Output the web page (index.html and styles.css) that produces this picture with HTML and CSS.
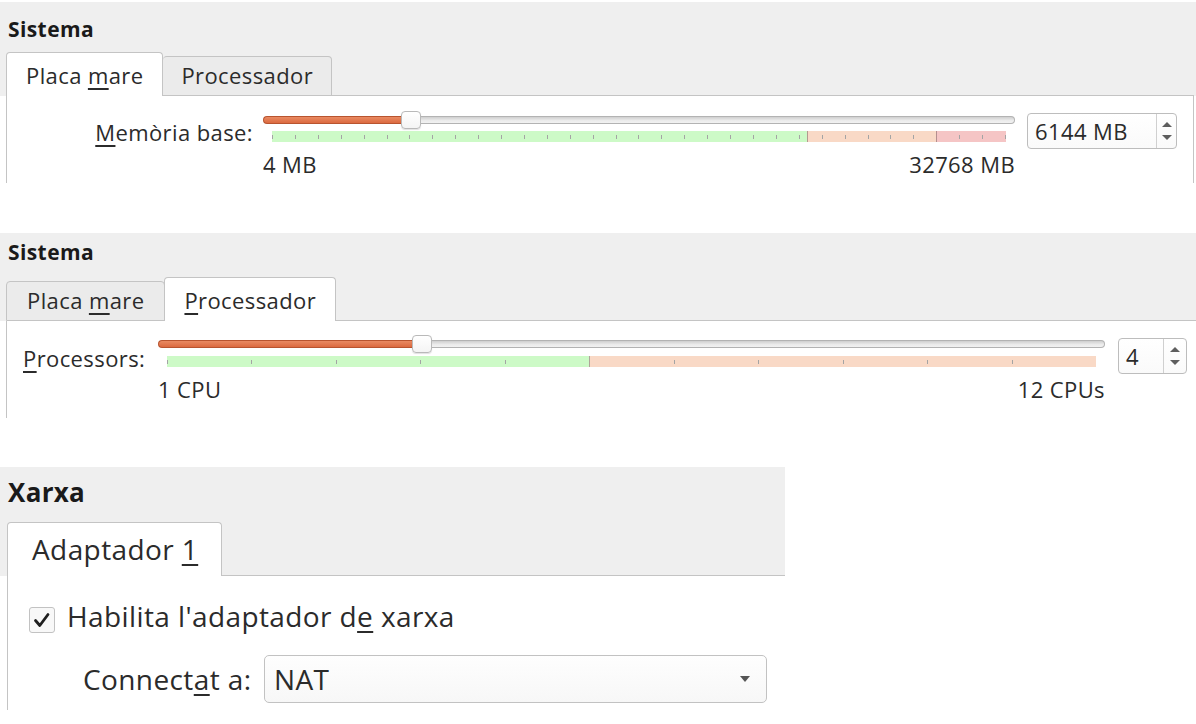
FILE: index.html
```html
<!DOCTYPE html>
<html lang="ca">
<head>
<meta charset="utf-8">
<title>Configuració</title>
<link rel="stylesheet" href="styles.css">
</head>
<body>
<main class="page">

  <section class="group group-a">
    <div class="group-head">
      <h2 class="group-title">Sistema</h2>
      <div class="tabs tabs-a">
        <div class="tab tab-active">Placa <span class="mn">m</span>are</div>
        <div class="tab">Processador</div>
        <div class="tab-fill"></div>
      </div>
    </div>
    <div class="pane pane-a">
      <div class="slider-row">
        <div class="field-label label-mem"><span class="mn">M</span>emòria base:</div>
        <div class="slider slider-mem">
          <div class="track">
            <div class="fill" style="width:138px"></div>
            <div class="knob"></div>
            <div class="rest"></div>
          </div>
          <div class="scale scale-mem"></div>
          <div class="range"><span>4 MB</span><span>32768 MB</span></div>
        </div>
        <div class="spin spin-mem">
          <span class="spin-value">6144 MB</span>
          <span class="spin-arrows"><i class="arr-up"></i><i class="arr-down"></i></span>
        </div>
      </div>
    </div>
  </section>

  <section class="group group-b">
    <div class="group-head">
      <h2 class="group-title">Sistema</h2>
      <div class="tabs">
        <div class="tab">Placa <span class="mn">m</span>are</div>
        <div class="tab tab-active"><span class="mn">P</span>rocessador</div>
        <div class="tab-fill"></div>
      </div>
    </div>
    <div class="pane pane-b">
      <div class="slider-row">
        <div class="field-label label-cpu"><span class="mn">P</span>rocessors:</div>
        <div class="slider slider-cpu">
          <div class="track">
            <div class="fill" style="width:254px"></div>
            <div class="knob"></div>
            <div class="rest"></div>
          </div>
          <div class="scale scale-cpu"></div>
          <div class="range"><span>1 CPU</span><span>12 CPUs</span></div>
        </div>
        <div class="spin spin-cpu">
          <span class="spin-value">4</span>
          <span class="spin-arrows"><i class="arr-up"></i><i class="arr-down"></i></span>
        </div>
      </div>
    </div>
  </section>

  <section class="group group-c">
    <div class="group-head">
      <h2 class="group-title">Xarxa</h2>
      <div class="tabs">
        <div class="tab tab-active">Adaptador <span class="mn">1</span></div>
        <div class="tab-fill"></div>
      </div>
    </div>
    <div class="pane pane-c">
      <div class="check-row">
        <span class="checkbox"><svg width="26" height="26" viewBox="0 0 26 26"><path d="M6.5 13.5 L10.8 18.5 L19 7.5" fill="none" stroke="#1f1f1f" stroke-width="2.8" stroke-linecap="round" stroke-linejoin="round"/></svg></span>
        <span class="check-text">Habilita l'adaptador d<span class="mn">e</span> xarxa</span>
      </div>
      <div class="form-row">
        <span class="form-label">Connect<span class="mn">a</span>t a:</span>
        <div class="combo"><span class="combo-value">NAT</span><i class="combo-arrow"></i></div>
      </div>
    </div>
  </section>

</main>
</body>
</html>
```
FILE: styles.css
```css
* { box-sizing: border-box; }

html, body {
  margin: 0;
  padding: 0;
  background: #ffffff;
}

body {
  font-family: "Open Sans", "Noto Sans", "DejaVu Sans", sans-serif;
  color: #2b2b2b;
  font-size: 22px;
  line-height: 30px;
  letter-spacing: 0.4px;
}

.page {
  display: flex;
  flex-direction: column;
  width: 1196px;
}

.mn {
  text-decoration: underline;
  text-decoration-thickness: 2px;
  text-underline-offset: 4px;
}

/* ---------- group ---------- */
.group { display: flex; flex-direction: column; }
.group-a { margin-top: 2px; }
.group-b { margin-top: 50px; }
.group-c { margin-top: 49px; width: 785px; }

.group-head {
  background: #efefef;
  display: flex;
  flex-direction: column;
}
.group-a .group-head { padding-top: 13px; }
.group-b .group-head { padding-top: 5px; }
.group-c .group-head { padding-top: 8px; }

.group-title {
  margin: 0;
  padding-left: 8px;
  font-size: 21px;
  line-height: 28px;
  font-weight: 700;
  letter-spacing: 0.4px;
  color: #1a1a1a;
}
.group-c .group-title { font-size: 26px; line-height: 34px; letter-spacing: 0.3px; }

.group-a .group-title { margin-bottom: 9px; }
.group-b .group-title { margin-bottom: 11px; }
.group-c .group-title { margin-bottom: 13px; }

/* ---------- tabs ---------- */
.tabs {
  display: flex;
  align-items: flex-end;
  margin-left: 6px;
}
.tabs-a { margin-right: 2px; }

.tab {
  padding: 3px 18px 5px;
  background: #ebebeb;
  border: 1px solid #c4c4c4;
  border-left: none;
  border-radius: 4px 4px 0 0;
  white-space: nowrap;
}
.tab:first-child { border-left: 1px solid #c4c4c4; padding: 3px 20px 5px; }
.tab-active,
.tab-active:first-child {
  padding: 7px 19px 6px;
  background: #ffffff;
  border-bottom: none;
  border-left: 1px solid #c4c4c4;
}
.tab-active + .tab { border-left: none; }
.tab + .tab-active { margin-left: -1px; }

.tab-fill {
  flex: 1;
  border-bottom: 1px solid #c4c4c4;
}

.group-c .tab-active {
  font-size: 28px;
  line-height: 38px;
  padding: 7px 23px 8px 24px;
  margin-left: 1px;
}

/* ---------- pane ---------- */
.pane {
  background: #ffffff;
  border-left: 1px solid #c4c4c4;
  margin-left: 6px;
}
.pane-a {
  height: 87px;
  margin-right: 2px;
  border-right: 1px solid #c4c4c4;
  padding-top: 15px;
}
.pane-b {
  height: 97px;
  padding-top: 14px;
}
.pane-c {
  height: 134px;
  margin-left: 7px;
  padding-top: 21px;
  font-size: 28px;
  line-height: 38px;
  letter-spacing: 0.4px;
}

/* ---------- slider row ---------- */
.slider-row {
  display: flex;
  align-items: flex-start;
}
.field-label { white-space: nowrap; }
.label-mem { width: 246px; text-align: right; margin-top: 6px; }
.label-cpu { width: 139px; padding-left: 16px; margin-top: 8px; }

.slider-mem { width: 752px; margin-left: 10px; }
.slider-cpu { width: 947px; margin-left: 12px; }

.track {
  display: flex;
  align-items: center;
  height: 18px;
}
.fill {
  height: 8px;
  background: linear-gradient(#e98a62, #dc6a40);
  border: 1px solid #b8542f;
  border-right: none;
  border-radius: 4px 0 0 4px;
}
.knob {
  width: 20px;
  height: 18px;
  background: linear-gradient(#ffffff, #f4f4f4);
  border: 1px solid #b9b9b9;
  border-radius: 4px;
  box-shadow: 0 1px 1px rgba(0,0,0,0.12);
}
.rest {
  flex: 1;
  height: 8px;
  background: linear-gradient(#cfcfcf, #ececec 60%, #f2f2f2);
  border: 1px solid #b3b3b3;
  border-left: none;
  border-radius: 0 4px 4px 0;
}

.scale {
  height: 11px;
  margin: 0 9px;
}
.scale-mem {
  margin-top: 2px;
  background:
    linear-gradient(90deg, transparent 535px, #b39a90 535px 536px, transparent 536px 664px, #b48f8f 664px 665px, transparent 665px),
    repeating-linear-gradient(90deg, #a4a4a4 0 1px, transparent 1px 22.906px) 0 50% / 100% 4px no-repeat,
    linear-gradient(90deg, #cdfac7 0 536px, #f9d9c6 536px 665px, #f5c5c5 665px);
}
.scale-cpu {
  margin-top: 3px;
  background:
    linear-gradient(90deg, transparent 422px, #b0a49a 422px 423px, transparent 423px),
    repeating-linear-gradient(90deg, #a4a4a4 0 1px, transparent 1px 84.455px) 0 50% / 100% 4px no-repeat,
    linear-gradient(90deg, #cdfac7 0 422px, #f9d9c6 422px);
}

.range {
  display: flex;
  justify-content: space-between;
  margin-top: 7px;
}

/* ---------- spin box ---------- */
.spin {
  display: flex;
  height: 36px;
  background: linear-gradient(#ffffff, #fafafa);
  border: 1px solid #bdbdbd;
  border-radius: 4px;
}
.spin-mem { width: 150px; margin-left: 12px; margin-top: 2px; }
.spin-cpu { width: 69px; margin-left: 13px; margin-top: 3px; }

.spin-value {
  flex: 1;
  display: flex;
  align-items: center;
  padding-left: 7px;
}
.spin-arrows {
  width: 20px;
  border-left: 1px solid #d0d0d0;
  display: flex;
  flex-direction: column;
  align-items: center;
  justify-content: center;
  gap: 8px;
}
.spin-cpu .spin-arrows { width: 23px; }

.arr-up, .arr-down {
  display: block;
  width: 0;
  height: 0;
  border-left: 5px solid transparent;
  border-right: 5px solid transparent;
}
.arr-up { border-bottom: 5px solid #5e5e5e; }
.arr-down { border-top: 5px solid #5e5e5e; }

/* ---------- network ---------- */
.check-row {
  display: flex;
  align-items: flex-start;
  padding-left: 21px;
}
.checkbox {
  width: 26px;
  height: 26px;
  margin-top: 10px;
  border: 1px solid #c2c2c2;
  border-radius: 3px;
  background: #f8f8f8;
  display: flex;
}
.checkbox svg { display: block; margin: -1px; }
.check-text { margin-left: 12px; white-space: nowrap; }

.form-row {
  display: flex;
  align-items: center;
  margin-top: 20px;
  padding-left: 75px;
}
.form-label { width: 181px; white-space: nowrap; }

.combo {
  width: 503px;
  height: 48px;
  display: flex;
  align-items: center;
  justify-content: space-between;
  padding: 0 16px 0 9px;
  border: 1px solid #c2c2c2;
  border-radius: 5px;
  background: linear-gradient(#fefefe, #f7f7f7);
}
.combo-arrow {
  display: block;
  width: 0;
  height: 0;
  border-left: 5px solid transparent;
  border-right: 5px solid transparent;
  border-top: 6px solid #555555;
}
```
